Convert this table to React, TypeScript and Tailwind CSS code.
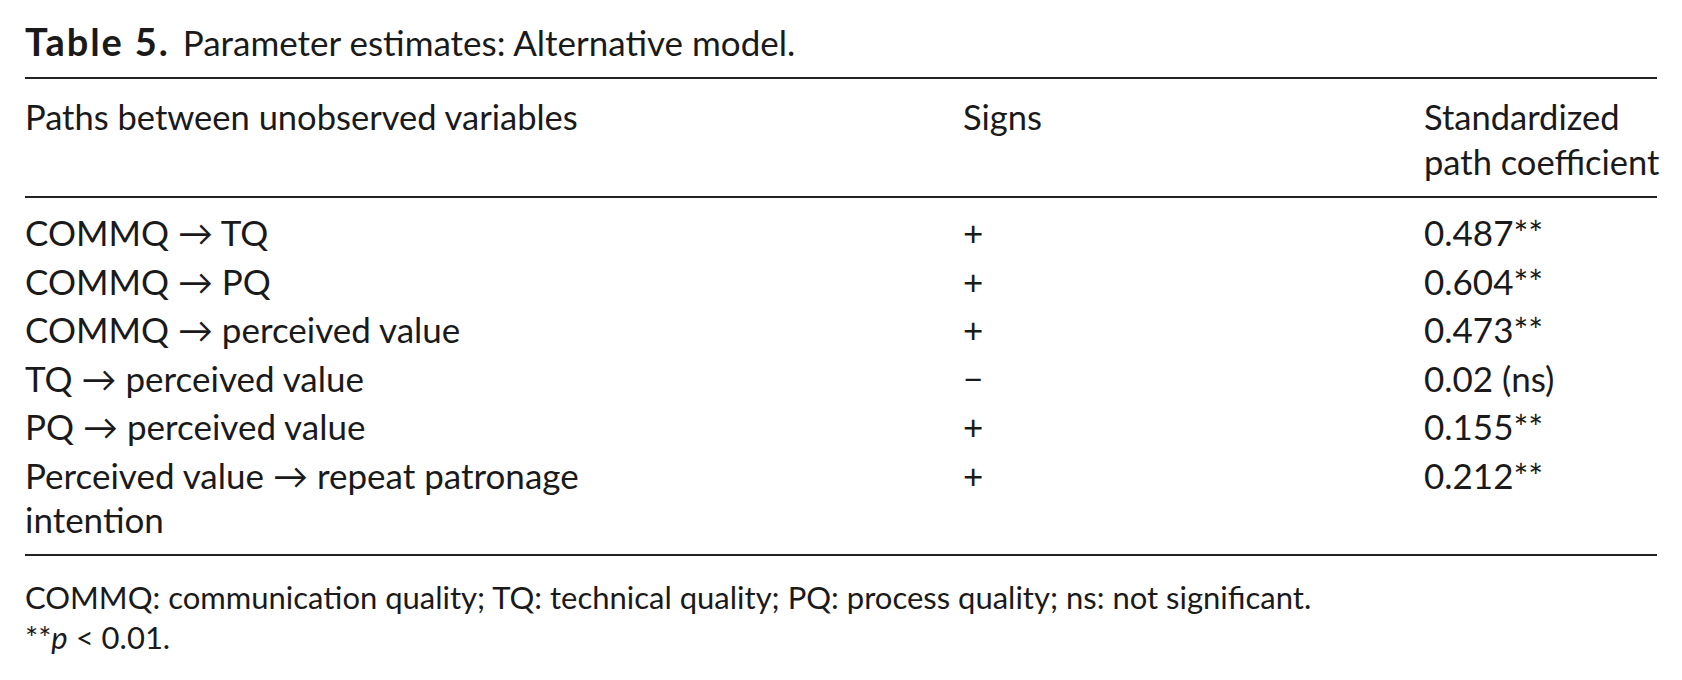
const rows = [
  { path: "COMMQ → TQ", sign: "+", value: "0.487", star: true },
  { path: "COMMQ → PQ", sign: "+", value: "0.604", star: true },
  { path: "COMMQ → perceived value", sign: "+", value: "0.473", star: true },
  { path: "TQ → perceived value", sign: "−", value: "0.02 (ns)", star: false },
  { path: "PQ → perceived value", sign: "+", value: "0.155", star: true },
  { path: "Perceived value → repeat patronage intention", sign: "+", value: "0.212", star: true },
];

export default function App() {
  return (
    <div className="w-[1682px] h-[680px] bg-white pl-[25px] pr-[25px] pt-[17px] text-[#1a1a1a] font-['Lato','Noto_Sans',sans-serif] text-[35px]">
      {/* caption */}
      <div className="leading-[48px] mb-[11px]">
        <span className="font-bold text-[38px] tracking-[0.05em]">Table 5.</span>
        <span className="ml-[13px]">Parameter estimates: Alternative model.</span>
      </div>

      <div className="border-t-2 border-[#222]" />

      {/* header */}
      <div className="grid grid-cols-[938px_461px_1fr] leading-[45px] pt-[15px] pb-[12px] text-[34.5px]">
        <div>Paths between unobserved variables</div>
        <div>Signs</div>
        <div className="whitespace-nowrap">
          Standardized
          <br />
          path coefficient
        </div>
      </div>

      <div className="border-t-2 border-[#222]" />

      {/* body */}
      <div className="pt-[10px] pb-[10px]">
        {rows.map((r) => (
          <div key={r.path} className="grid grid-cols-[938px_461px_1fr] leading-[44.5px] py-[2px]">
            <div className="max-w-[600px]">{r.path}</div>
            <div>{r.sign}</div>
            <div className="whitespace-nowrap">
              {r.value}
              {r.star && <span>**</span>}
            </div>
          </div>
        ))}
      </div>

      <div className="border-t-2 border-[#222]" />

      {/* notes */}
      <div className="pt-[21px] leading-[40px] text-[31px]">
        <div>COMMQ: communication quality; TQ: technical quality; PQ: process quality; ns: not significant.</div>
        <div>
          **<span className="italic">p</span> &lt; 0.01.
        </div>
      </div>
    </div>
  );
}
